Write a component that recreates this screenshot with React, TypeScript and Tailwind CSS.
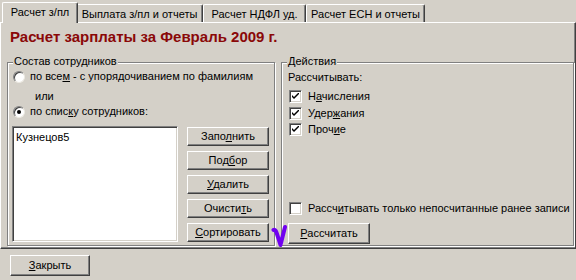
const raised =
  'border border-t-white border-l-white border-r-[#404040] border-b-[#404040] shadow-[inset_-1px_-1px_0_#808080] bg-[#d4d0c8]';
const sunken =
  'border border-t-[#808080] border-l-[#808080] border-r-white border-b-white shadow-[inset_1px_1px_0_#404040,inset_-1px_-1px_0_#d4d0c8]';
const etched = 'border border-[#808080] shadow-[inset_1px_1px_0_#fff,1px_1px_0_#fff]';

function Tab({ label, width, active }: { label: string; width: string; active?: boolean }) {
  return (
    <div
      className={`${width} flex items-center justify-center border-t border-l border-white border-r border-r-[#404040] rounded-t-[2px] shadow-[inset_-1px_0_0_#808080] bg-[#d4d0c8] ${
        active ? 'h-[21px] relative z-10 -mb-[1px] -mx-[2px] pb-[2px]' : 'h-[18px] pt-[1px]'
      }`}
    >
      {label}
    </div>
  );
}

function Button({ children, className = '' }: { children: React.ReactNode; className?: string }) {
  return (
    <div className={`${raised} flex items-center justify-center ${className}`}>{children}</div>
  );
}

function Radio({ checked }: { checked?: boolean }) {
  return (
    <span className="w-[12px] h-[12px] rounded-full bg-white border border-t-[#808080] border-l-[#808080] border-r-[#ece9e2] border-b-[#ece9e2] shadow-[inset_1px_1px_0_#404040] flex items-center justify-center shrink-0">
      {checked && <span className="w-[4px] h-[4px] rounded-full bg-black" />}
    </span>
  );
}

function Check({ checked }: { checked?: boolean }) {
  return (
    <span className={`w-[13px] h-[13px] bg-white ${sunken} flex items-center justify-center shrink-0`}>
      {checked && (
        <svg width="7" height="7" viewBox="0 0 7 7">
          <path d="M0 2 L0 4 L2 6 L7 1 L7 -1 L2 4 Z" fill="#000" />
        </svg>
      )}
    </span>
  );
}

export default function App() {
  return (
    <div className="relative w-[576px] h-[280px] bg-[#d4d0c8] text-black text-[11px] leading-[13px] whitespace-nowrap font-['Liberation_Sans',Arial,sans-serif] overflow-hidden">
      {/* tabs */}
      <div className="flex items-end h-[22px] pl-[4px]">
        <Tab label="Расчет з/пл" width="w-[76px]" active />
        <Tab label="Выплата з/пл и отчеты" width="w-[127px]" />
        <Tab label="Расчет НДФЛ уд." width="w-[103px]" />
        <Tab label="Расчет ЕСН и отчеты" width="w-[119px]" />
      </div>

      {/* tab page */}
      <div className="w-[576px] h-[227px] border border-t-white border-l-white border-r-[#404040] border-b-[#404040] shadow-[inset_-1px_-1px_0_#808080]">
        <div className="mt-[5px] ml-[9px] h-[18px] text-[15px] leading-[18px] font-bold text-[#8a0808]">
          Расчет зарплаты за Февраль 2009 г.
        </div>

        <div className="flex gap-[6px] mt-[16px] ml-[6px]">
          {/* Состав сотрудников */}
          <div className={`relative w-[268px] h-[184px] ${etched}`}>
            <span className="absolute -top-[8px] left-[5px] px-[1px] bg-[#d4d0c8]">Состав сотрудников</span>
            <div className="flex items-center gap-[5px] mt-[7px] pl-[5px] h-[13px]">
              <Radio />
              <span>
                по все<u>м</u> - с упорядочиванием по фамилиям
              </span>
            </div>
            <div className="mt-[7px] pl-[27px] h-[13px]">или</div>
            <div className="flex items-center gap-[5px] mt-[2px] pl-[5px] h-[13px]">
              <Radio checked />
              <span>
                по спис<u>к</u>у сотрудников:
              </span>
            </div>
            <div className="flex gap-[9px] mt-[8px] pl-[4px]">
              <div className={`w-[166px] h-[116px] bg-white ${sunken} pl-[3px] pt-[4px]`}>Кузнецов5</div>
              <div className="flex flex-col gap-[5px] mt-[1px]">
                <Button className="w-[82px] h-[19px]">
                  <span>
                    Запо<u>л</u>нить
                  </span>
                </Button>
                <Button className="w-[82px] h-[19px]">
                  <span>
                    Под<u>б</u>ор
                  </span>
                </Button>
                <Button className="w-[82px] h-[19px]">
                  <span>
                    <u>У</u>далить
                  </span>
                </Button>
                <Button className="w-[82px] h-[19px]">
                  <span>
                    Очисти<u>т</u>ь
                  </span>
                </Button>
                <Button className="w-[82px] h-[19px]">
                  <span>
                    <u>С</u>ортировать
                  </span>
                </Button>
              </div>
            </div>
          </div>

          {/* Действия */}
          <div className={`relative w-[293px] h-[184px] ${etched} flex flex-col pl-[6px] pb-[1px]`}>
            <span className="absolute -top-[8px] left-[5px] px-[1px] bg-[#d4d0c8]">Действия</span>
            <div className="mt-[8px] h-[13px]">Рассчитывать:</div>
            <div className="flex flex-col gap-[3.5px] mt-[6px] pl-[1px]">
              <div className="flex items-center gap-[6px] h-[13px]">
                <Check checked />
                <span>
                  Н<u>а</u>числения
                </span>
              </div>
              <div className="flex items-center gap-[6px] h-[13px]">
                <Check checked />
                <span>
                  Удер<u>ж</u>ания
                </span>
              </div>
              <div className="flex items-center gap-[6px] h-[13px]">
                <Check checked />
                <span>
                  Проч<u>и</u>е
                </span>
              </div>
            </div>
            <div className="mt-auto flex items-center gap-[6px] h-[13px] pl-[1px]">
              <Check />
              <span>
                Рассч<u>и</u>тывать только непосчитанные ранее записи
              </span>
            </div>
            <Button className="mt-[8px] w-[82px] h-[21px]">
              <span>
                <u>Р</u>ассчитать
              </span>
            </Button>
          </div>
        </div>
      </div>

      <div className="pl-[10px] pt-[6px]">
        <Button className="w-[80px] h-[21px]">
          <span>
            <u>З</u>акрыть
          </span>
        </Button>
      </div>

      {/* hand-drawn mark */}
      <svg className="absolute left-[271px] top-[224px]" width="18" height="25" viewBox="0 0 18 25">
        <path
          d="M2.5 6 C4 5 5 7 6 10 L9.5 21 L14 3"
          fill="none"
          stroke="#7000f0"
          strokeWidth="4"
          strokeLinecap="round"
          strokeLinejoin="round"
        />
      </svg>
    </div>
  );
}
